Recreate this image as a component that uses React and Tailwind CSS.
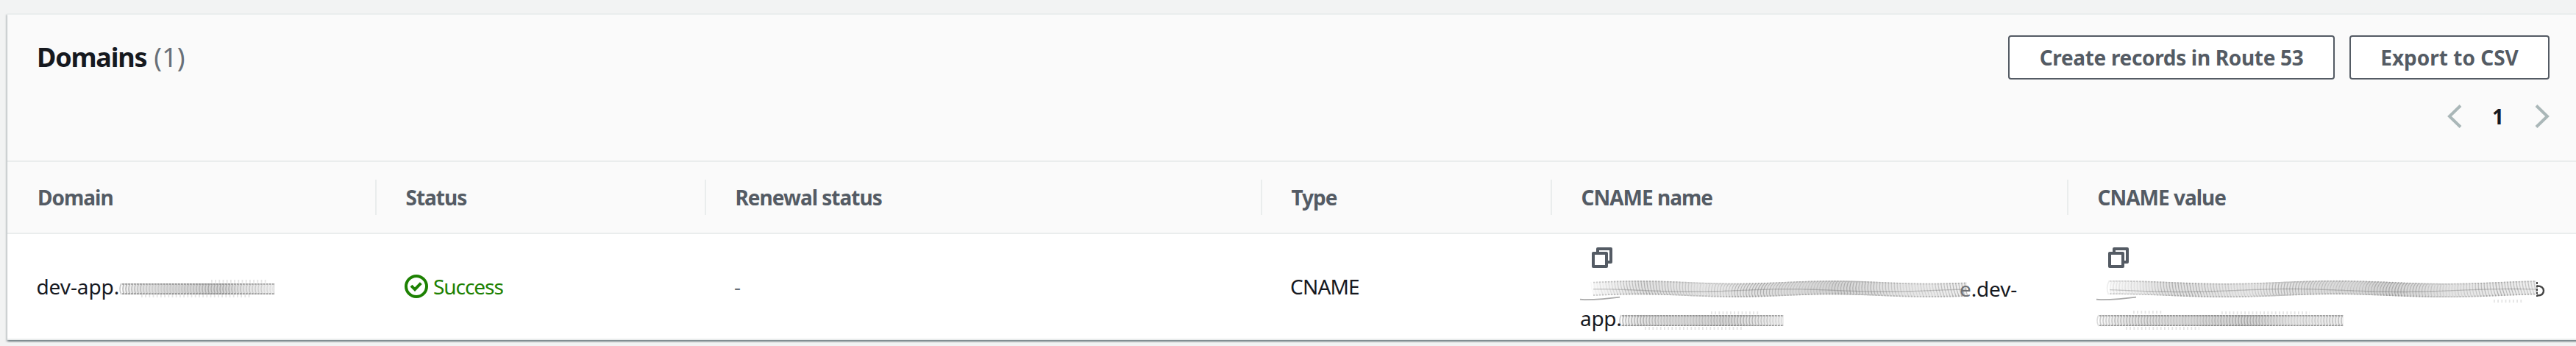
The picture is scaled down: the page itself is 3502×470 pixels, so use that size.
const noise = (n) => {
  const v = Math.sin(n * 12.9898) * 43758.5453;
  return v - Math.floor(v);
};

/* A redacted value: overlapping letter arcs dragged along a gently waving band. */
function Smudge({ width, amp = 0, bend = 0, step = 4, lead = false, fade = 40, top = 12, body = 15, seed = 1, strays = [], className = '' }) {
  const wave = (x) => Math.sin((x / width) * Math.PI * 4 + bend) * amp;
  const start = lead ? 14 : 0;
  const id = `tone-${seed}`;
  const arcs = [];
  for (let x = start; x < width - 2; x += step) {
    const near = Math.max(0, 1 - (x - start) / fade);
    const y = top + wave(x);
    const lean = lead ? 5 * Math.sin(x / 70 + seed) : 0;
    const tone = 0.18 + 0.1 * Math.sin(x / 23 + seed) + 0.08 * noise(x + seed);
    arcs.push(
      <path
        key={x}
        d={`M${x + 3 + lean / 2} ${y}q${-4 - lean} ${body / 2} ${-lean} ${body}`}
        stroke="#4a4a4a"
        strokeWidth={1.2 + 0.5 * near}
        opacity={tone + (lead ? -0.1 : 0.05) * near}
      />,
    );
  }
  const run = (dy, phase = 0) => {
    let d = '';
    for (let x = start + 4; x <= width; x += 4) {
      d += `${d ? 'L' : 'M'}${x} ${(top + dy + wave(x + phase)).toFixed(1)}`;
    }
    return d;
  };
  return (
    <svg width={width} height="40" viewBox={`0 0 ${width} 40`} fill="none" className={`block shrink-0 overflow-visible ${className}`}>
      <defs>
        <linearGradient id={id} gradientUnits="userSpaceOnUse" x1={start} x2={width} y1="0" y2="0">
          <stop offset="0" stopColor="#777" stopOpacity="0.03" />
          <stop offset=".14" stopColor="#777" stopOpacity=".22" />
          <stop offset=".35" stopColor="#777" stopOpacity={lead ? '.18' : '.3'} />
          <stop offset=".65" stopColor="#777" stopOpacity=".32" />
          <stop offset=".8" stopColor="#777" stopOpacity=".2" />
          <stop offset="1" stopColor="#777" stopOpacity=".12" />
        </linearGradient>
      </defs>
      <path d={run(body / 2)} stroke={`url(#${id})`} strokeWidth={body} />
      {arcs}
      <path d={run(0.8)} stroke={lead ? '#777' : '#333'} strokeWidth="1.8" strokeDasharray="2.4 1.6" opacity={lead ? '.3' : '.42'} />
      <path d={run(body - 0.8)} stroke={lead ? '#777' : '#333'} strokeWidth="1.8" strokeDasharray="2.4 1.6" opacity={lead ? '.35' : '.45'} />
      {lead && <path d={run(body / 2 + 2, 60)} stroke="#555" strokeWidth="1.4" opacity=".28" />}
      {lead && <path d="M0 34.6L6 35.2q26 -.6 48 -3.6" stroke="#333" strokeWidth="1.8" opacity=".42" />}
      {strays.map(([a, b, y]) => (
        <path key={`${a}-${y}`} d={`M${a} ${y}H${b}`} stroke="#777" strokeWidth="4" strokeDasharray="1.8 3.4" opacity=".2" />
      ))}
    </svg>
  );
}

function CopyIcon() {
  return (
    <svg width="28" height="28" viewBox="0 0 28 28" fill="none" stroke="#545b64" strokeWidth="4" strokeLinejoin="round" className="block">
      <path d="M2 8h18v18H2z" />
      <path d="M8 8V2h18v18h-6" />
    </svg>
  );
}

function SuccessIcon() {
  return (
    <svg width="32" height="32" viewBox="0 0 32 32" fill="none" stroke="#1d8102" strokeWidth="4" className="block">
      <circle cx="16" cy="16" r="14" />
      <path d="M9 15.2l5 5L22.3 11.6" />
    </svg>
  );
}

function Chevron({ d }) {
  return (
    <svg width="20" height="32" viewBox="0 0 20 32" fill="none" stroke="#aab7b8" strokeWidth="4" className="block">
      <path d={d} />
    </svg>
  );
}

const grid = 'grid grid-cols-[502px_448px_756px_394px_702px_690px]';

const headings = [
  ['Domain', 'pl-[41px]'],
  ['Status', 'pl-[39.5px]'],
  ['Renewal status', 'pl-[39.5px]'],
  ['Type', 'pl-[39.5px]'],
  ['CNAME name', 'pl-[39.5px]'],
  ['CNAME value', 'pl-[39.5px]'],
];

const button =
  'flex h-[60px] items-center justify-center rounded-[4px] border-2 border-[#545b64] bg-white font-bold text-[#545b64] whitespace-nowrap';

export default function App() {
  return (
    <div className="h-[470px] w-[3502px] overflow-hidden bg-[#f2f3f3] pt-[18px] pl-[10px] font-['Noto_Sans',sans-serif] text-[28px] leading-[40px] whitespace-nowrap text-[#16191f]">
      <section className="h-[444px] w-[3510px] border-t-2 border-[#eaeded] bg-white shadow-[0_2px_2px_0_rgba(0,28,36,0.3),2px_2px_2px_0_rgba(0,28,36,0.15),-2px_2px_2px_0_rgba(0,28,36,0.15)]">
        <header className="h-[200px] w-full border-b-2 border-[#eaeded] bg-[#fafafa] pt-7">
          <div className="flex w-[3456px] items-center justify-between pl-[40px]">
            <h2 className="flex text-[36px] font-bold tracking-[-1.2px]">
              Domains
              <span className="ml-[10px] font-normal tracking-normal text-[#687078]">(1)</span>
            </h2>
            <div className="flex gap-5">
              <button className={`${button} w-[444px] tracking-[-0.33px]`}>Create records in Route 53</button>
              <button className={`${button} w-[272px]`}>Export to CSV</button>
            </div>
          </div>
          <div className="mt-[30px] flex w-[3456px] items-center justify-end">
            <Chevron d="M18 1.5L3 16L18 30.5" />
            <span className="w-[99px] pr-[1px] text-center font-bold">1</span>
            <Chevron d="M2 1.5L17 16L2 30.5" />
          </div>
        </header>

        <div className={`${grid} h-[98px] border-b-2 border-[#eaeded] bg-[#fafafa]`}>
          {headings.map(([label, pad], i) => (
            <div key={label} className="flex items-center">
              <div
                className={`flex h-12 flex-1 items-center font-bold tracking-[-1px] text-[#545b64] ${pad} ${i < 5 ? 'border-r-2 border-[#eaeded]' : ''}`}
              >
                {label}
              </div>
            </div>
          ))}
        </div>

        <div className={`${grid} h-[144px] border-b-2 border-[#eaeded]`}>
          <div className="flex items-center pl-[39.5px]">
            <span className="w-[112px] tracking-[-0.1px]">dev-app.</span>
            <Smudge width={212} top={16} seed={2} strays={[[30, 180, 33], [125, 200, 13]]} />
          </div>
          <div className="flex items-center gap-[7px] pl-[38px] text-[#1d8102]">
            <SuccessIcon />
            <span className="tracking-[-1.05px]">Success</span>
          </div>
          <div className="flex items-center pl-[38px] text-[#687078]">-</div>
          <div className="flex items-center pl-[38px] tracking-[-0.8px]">CNAME</div>
          <div className="pt-[18px] pl-[38px]">
            <div className="pl-4">
              <CopyIcon />
            </div>
            <div className="mt-2 flex h-10">
              <Smudge width={526} amp={1.8} bend={2.8} lead top={11} body={19} seed={4} />
              <span className="ml-[-10px] text-[#707276]">e</span>
              <span className="tracking-[-0.2px]">.dev-</span>
            </div>
            <div className="flex h-10">
              <span className="w-[53px] tracking-[-0.3px]">app.</span>
              <Smudge width={224} top={16} seed={7} strays={[[35, 170, 34], [125, 190, 13]]} />
            </div>
          </div>
          <div className="pt-[18px] pl-[38px]">
            <div className="pl-4">
              <CopyIcon />
            </div>
            <div className="mt-2 flex h-10">
              <Smudge width={599} amp={2} bend={4.2} lead top={11} body={19} seed={9} strays={[[540, 580, 37]]} />
              <svg width="16" height="40" viewBox="0 0 16 40" fill="none" stroke="#444" className="ml-[-4px] block">
                <path d="M4 11V31" strokeWidth="2" strokeDasharray="3 1.5" />
                <path d="M4 16.5q9 0 9 6.5t-9 6.5" strokeWidth="2.4" />
              </svg>
            </div>
            <div className="flex h-10">
              <Smudge width={338} top={16} seed={12} strays={[[40, 140, 34], [50, 90, 12], [170, 290, 13]]} />
            </div>
          </div>
        </div>
      </section>
    </div>
  );
}
